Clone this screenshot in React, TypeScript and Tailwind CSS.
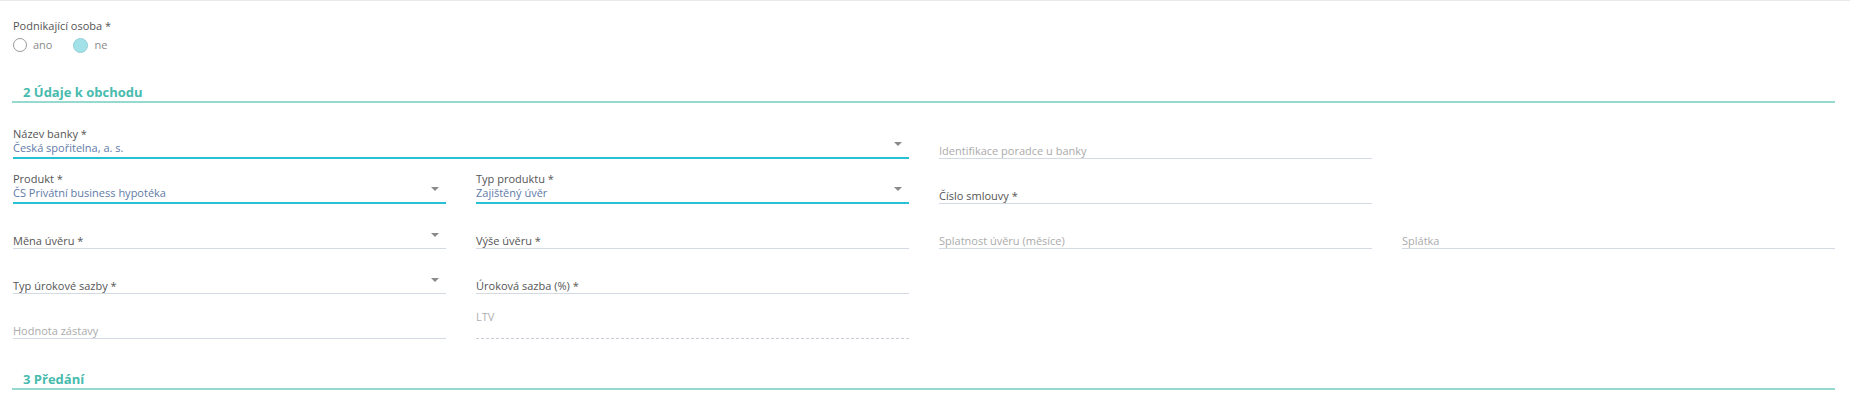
import React from 'react';

type FieldProps = {
  label: string;
  value?: string;
  select?: boolean;
  required?: boolean;
  dashed?: boolean;
  floating?: boolean;
  className?: string;
};

const Arrow = () => (
  <span className="absolute right-[7px] bottom-[11px] w-0 h-0 border-l-[4px] border-r-[4px] border-t-[4px] border-l-transparent border-r-transparent border-t-[#8a8a8a]" />
);

// one form field: floating label when it has a value, placeholder label otherwise
const Field: React.FC<FieldProps> = ({ label, value, select, required, dashed, floating, className }) => {
  const filled = value !== undefined;
  const lineClass = filled
    ? 'border-b-2 border-[#27c0d5] pb-[2px]'
    : dashed
      ? 'border-b border-dashed border-[#c9ced8]'
      : 'border-b border-[#d4dae4]';

  return (
    <div className={`relative h-[45px] flex flex-col justify-end ${lineClass} ${className ?? ''}`}>
      {filled ? (
        <>
          <div className="text-[11px] leading-[14px] text-[#555]">{label}</div>
          <div className="text-[11px] leading-[14px] text-[#5f7ba8]">{value}</div>
        </>
      ) : floating ? (
        <>
          <div className="text-[11px] leading-[14px] text-[#b0b0b0]">{label}</div>
          <div className="h-[14px]" />
        </>
      ) : (
        <div className={`text-[11px] leading-[14px] ${required ? 'text-[#555]' : 'text-[#ababab]'}`}>{label}</div>
      )}
      {select && <Arrow />}
    </div>
  );
};

const SectionHeading = ({ title, className }: { title: string; className?: string }) => (
  <div className={`ml-[12px] mr-[15px] pl-[11px] border-b-2 border-[#95d9d1] ${className ?? ''}`}>
    <span className="block text-[13px] leading-[17px] font-bold text-[#47bbad]">{title}</span>
  </div>
);

export default function App() {
  return (
    <div className="w-[1850px] h-[394px] overflow-hidden bg-white border-t border-[#e8e8e8] font-['Open_Sans',sans-serif]">
      <div className="pl-[13px] pt-[18px]">
        <div className="text-[11px] leading-[14px] text-[#555]">Podnikající osoba *</div>
        <div className="mt-[5px] flex items-center h-[14px] text-[11px] text-[#8a8a8a]">
          <label className="flex items-center gap-[6px]">
            <span className="w-[14px] h-[14px] rounded-full border border-[#9a9a9a] bg-white" />
            <span>ano</span>
          </label>
          <label className="ml-[21px] flex items-center gap-[6px]">
            <span className="w-[15px] h-[15px] rounded-full border border-[#93cfd6] bg-[#a3e1e9]" />
            <span>ne</span>
          </label>
        </div>
      </div>

      <SectionHeading title="2 Údaje k obchodu" className="mt-[32px]" />

      <div className="mt-[11px] ml-[13px] mr-[15px] grid grid-cols-4 gap-x-[30px]">
        <Field className="col-span-2" label="Název banky *" value="Česká spořitelna, a. s." select />
        <Field label="Identifikace poradce u banky" />
        <div />

        <Field label="Produkt *" value="ČS Privátní business hypotéka" select />
        <Field label="Typ produktu *" value="Zajištěný úvěr" select />
        <Field label="Číslo smlouvy *" required />
        <div />

        <Field label="Měna úvěru *" required select />
        <Field label="Výše úvěru *" required />
        <Field label="Splatnost úvěru (měsíce)" />
        <Field label="Splátka" />

        <Field label="Typ úrokové sazby *" required select />
        <Field label="Úroková sazba (%) *" required />
        <div />
        <div />

        <Field label="Hodnota zástavy" />
        <Field label="LTV" dashed floating />
        <div />
        <div />
      </div>

      <SectionHeading title="3 Předání" className="mt-[32px]" />
    </div>
  );
}
